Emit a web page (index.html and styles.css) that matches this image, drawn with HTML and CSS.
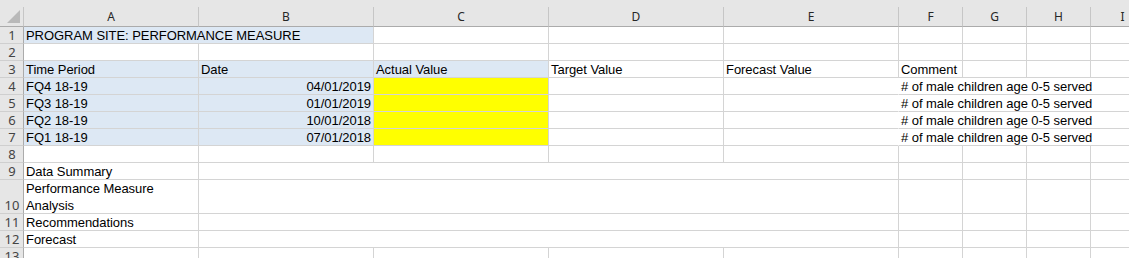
FILE: index.html
```html
<!DOCTYPE html>
<html lang="en">
<head>
<meta charset="utf-8">
<title>Performance Measure</title>
<link rel="stylesheet" href="styles.css">
</head>
<body>
<div class="sheet">
  <div class="corner"><span class="tri"></span></div>
  <div class="colhead">A</div>
  <div class="colhead">B</div>
  <div class="colhead">C</div>
  <div class="colhead">D</div>
  <div class="colhead">E</div>
  <div class="colhead">F</div>
  <div class="colhead">G</div>
  <div class="colhead">H</div>
  <div class="colhead">I</div>

  <!-- row 1 -->
  <div class="rowhead">1</div>
  <div class="cell blue span-ab">PROGRAM SITE: PERFORMANCE MEASURE</div>
  <div class="cell"></div><div class="cell"></div><div class="cell"></div>
  <div class="cell"></div><div class="cell"></div><div class="cell"></div><div class="cell"></div>

  <!-- row 2 -->
  <div class="rowhead">2</div>
  <div class="cell"></div><div class="cell"></div><div class="cell"></div><div class="cell"></div>
  <div class="cell"></div><div class="cell"></div><div class="cell"></div><div class="cell"></div><div class="cell"></div>

  <!-- row 3 -->
  <div class="rowhead">3</div>
  <div class="cell blue">Time Period</div>
  <div class="cell blue">Date</div>
  <div class="cell blue">Actual Value</div>
  <div class="cell">Target Value</div>
  <div class="cell">Forecast Value</div>
  <div class="cell">Comment</div>
  <div class="cell"></div><div class="cell"></div><div class="cell"></div>

  <!-- rows 4-7 -->
  <div class="rowhead">4</div>
  <div class="cell blue">FQ4 18-19</div>
  <div class="cell blue num">04/01/2019</div>
  <div class="cell yellow"></div>
  <div class="cell"></div>
  <div class="cell open"></div>
  <div class="cell span-fi">#&nbsp;of male children age 0-5 served</div>

  <div class="rowhead">5</div>
  <div class="cell blue">FQ3 18-19</div>
  <div class="cell blue num">01/01/2019</div>
  <div class="cell yellow"></div>
  <div class="cell"></div>
  <div class="cell open"></div>
  <div class="cell span-fi">#&nbsp;of male children age 0-5 served</div>

  <div class="rowhead">6</div>
  <div class="cell blue">FQ2 18-19</div>
  <div class="cell blue num">10/01/2018</div>
  <div class="cell yellow"></div>
  <div class="cell"></div>
  <div class="cell open"></div>
  <div class="cell span-fi">#&nbsp;of male children age 0-5 served</div>

  <div class="rowhead">7</div>
  <div class="cell blue">FQ1 18-19</div>
  <div class="cell blue num">07/01/2018</div>
  <div class="cell yellow"></div>
  <div class="cell"></div>
  <div class="cell open"></div>
  <div class="cell span-fi">#&nbsp;of male children age 0-5 served</div>

  <!-- row 8 -->
  <div class="rowhead">8</div>
  <div class="cell"></div><div class="cell"></div><div class="cell"></div><div class="cell"></div>
  <div class="cell"></div><div class="cell"></div><div class="cell"></div><div class="cell"></div><div class="cell"></div>

  <!-- rows 9-12 -->
  <div class="rowhead">9</div>
  <div class="cell">Data Summary</div>
  <div class="cell span-be"></div>
  <div class="cell"></div><div class="cell"></div><div class="cell"></div><div class="cell"></div>

  <div class="rowhead">10</div>
  <div class="cell wrap"><span>Performance Measure Analysis</span></div>
  <div class="cell span-be"></div>
  <div class="cell"></div><div class="cell"></div><div class="cell"></div><div class="cell"></div>

  <div class="rowhead">11</div>
  <div class="cell">Recommendations</div>
  <div class="cell span-be"></div>
  <div class="cell"></div><div class="cell"></div><div class="cell"></div><div class="cell"></div>

  <div class="rowhead">12</div>
  <div class="cell">Forecast</div>
  <div class="cell span-be"></div>
  <div class="cell"></div><div class="cell"></div><div class="cell"></div><div class="cell"></div>

  <!-- row 13 -->
  <div class="rowhead">13</div>
  <div class="cell"></div><div class="cell"></div><div class="cell"></div><div class="cell"></div>
  <div class="cell"></div><div class="cell"></div><div class="cell"></div><div class="cell"></div><div class="cell"></div>
</div>
</body>
</html>
```

FILE: styles.css
```css
html, body {
  margin: 0;
  padding: 0;
  background: #ffffff;
  overflow: hidden;
}

.sheet {
  display: grid;
  grid-template-columns: 24px 175px 175px 175px 175px 175px 64px 64px 64px 64px;
  grid-template-rows: 20px repeat(9, 17px) 34px repeat(3, 17px);
  padding-top: 7px;
  background: linear-gradient(#e6e6e6, #e6e6e6) top / 100% 7px no-repeat, #ffffff;
  width: max-content;
  font-family: "Liberation Sans", Arial, sans-serif;
  font-size: 13px;
  color: #000000;
}

/* column letters */
.corner,
.colhead {
  background: #e6e6e6;
  border-bottom: 1px solid #ababab;
  box-sizing: border-box;
}

.corner {
  border-right: 1px solid #c6c6c6;
  position: relative;
}

.tri {
  position: absolute;
  right: 3px;
  bottom: 3px;
  width: 0;
  height: 0;
  border-left: 13px solid transparent;
  border-bottom: 13px solid #b9b9b9;
}

.colhead {
  border-right: 1px solid #c6c6c6;
  font-family: "Noto Sans", "DejaVu Sans", sans-serif;
  font-size: 12px;
  color: #262626;
  display: flex;
  align-items: center;
  justify-content: center;
  line-height: 1;
  padding-top: 1px;
}

/* row numbers */
.rowhead {
  background: #e6e6e6;
  border-right: 1px solid #ababab;
  border-bottom: 1px solid #cfcfcf;
  box-sizing: border-box;
  font-family: "Noto Sans", "DejaVu Sans", sans-serif;
  font-size: 13px;
  color: #444444;
  display: flex;
  align-items: flex-end;
  justify-content: center;
  line-height: 16px;
  padding-left: 1px;
}

/* worksheet cells */
.cell {
  box-sizing: border-box;
  border-right: 1px solid #d4d4d4;
  border-bottom: 1px solid #d4d4d4;
  padding: 0 2px;
  line-height: 14px;
  white-space: nowrap;
  overflow: hidden;
  display: flex;
  align-items: flex-end;
  letter-spacing: -0.05px;
}

.cell.num {
  justify-content: flex-end;
}

.cell.open {
  border-right-color: transparent;
}

/* wrapped text keeps the 17px row pitch */
.cell.wrap {
  white-space: normal;
  line-height: 17px;
}

.cell.wrap span {
  margin-bottom: -1px;
}

.blue {
  background: #dde8f4;
}

.yellow {
  background: #ffff00;
}

.span-ab {
  grid-column: span 2;
}

.span-be {
  grid-column: span 4;
}

.span-fi {
  grid-column: span 4;
  overflow: visible;
}
```
